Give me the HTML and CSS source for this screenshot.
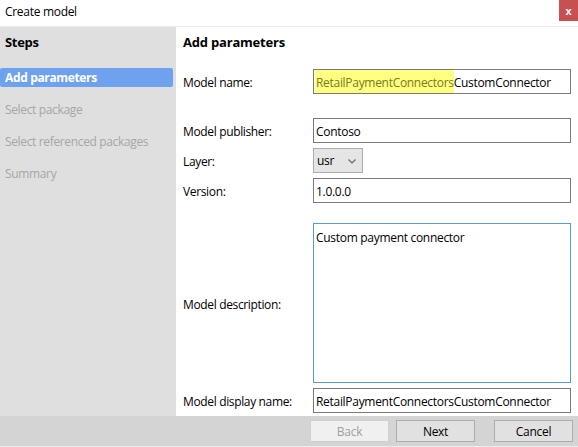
FILE: index.html
```html
<!DOCTYPE html>
<html>
<head>
<meta charset="utf-8">
<link rel="stylesheet" href="styles.css">
</head>
<body>
<div class="window">
  <div class="titlebar">
    <span class="title">Create model</span>
    <span class="close">x</span>
  </div>
  <div class="main">
    <aside class="sidebar">
      <div class="side-head">Steps</div>
      <ul class="steps">
        <li class="step active">Add parameters</li>
        <li class="step">Select package</li>
        <li class="step">Select referenced packages</li>
        <li class="step">Summary</li>
      </ul>
    </aside>
    <section class="content">
      <h1 class="heading">Add parameters</h1>
      <div class="form">
        <div class="row r-name">
          <label class="lbl">Model name:</label>
          <div class="field"><span class="hl">RetailPaymentConnectors</span>CustomConnector</div>
        </div>
        <div class="row r-pub">
          <label class="lbl">Model publisher:</label>
          <div class="field">Contoso</div>
        </div>
        <div class="row r-layer">
          <label class="lbl">Layer:</label>
          <div class="select"><span>usr</span>
            <svg class="chev" width="8" height="5" viewBox="0 0 8 5"><path d="M0.5 0.5 L4 4 L7.5 0.5" fill="none" stroke="#6b6b6b" stroke-width="1.2"/></svg>
          </div>
        </div>
        <div class="row r-ver">
          <label class="lbl">Version:</label>
          <div class="field">1.0.0.0</div>
        </div>
        <div class="row r-desc">
          <label class="lbl">Model description:</label>
          <div class="field area">Custom payment connector</div>
        </div>
        <div class="row r-disp">
          <label class="lbl">Model display name:</label>
          <div class="field">RetailPaymentConnectorsCustomConnector</div>
        </div>
      </div>
    </section>
  </div>
  <div class="footer">
    <button class="btn disabled">Back</button>
    <button class="btn next">Next</button>
    <button class="btn cancel">Cancel</button>
  </div>
</div>
</body>
</html>
```

FILE: styles.css
```css
* { box-sizing: border-box; }
html, body { margin: 0; padding: 0; }
body {
  font-family: "Open Sans", "Noto Sans", "Liberation Sans", sans-serif;
  font-size: 12px;
  color: #000;
  background: #fff;
}
.window {
  width: 578px;
  height: 447px;
  display: flex;
  flex-direction: column;
  background: #fff;
}
.titlebar {
  height: 27px;
  flex: 0 0 27px;
  border-bottom: 1px solid #ececec;
  display: flex;
  align-items: flex-start;
  justify-content: space-between;
}
.title {
  padding: 3px 0 0 5px;
  font-size: 12px;
  letter-spacing: -0.3px;
}
.close {
  width: 19px;
  height: 21px;
  background: #c75050;
  color: #fff;
  font-weight: bold;
  font-size: 11px;
  display: flex;
  align-items: center;
  justify-content: center;
  font-family: "Liberation Sans", sans-serif;
}
.main {
  flex: 1;
  display: flex;
  min-height: 0;
}
.sidebar {
  width: 176px;
  flex: 0 0 176px;
  background: #dfdfdf;
}
.side-head {
  font-weight: bold;
  font-size: 13px;
  padding: 6px 0 0 5px;
  height: 41px;
  letter-spacing: -0.3px;
}
.steps {
  list-style: none;
  margin: 0;
  padding: 0;
}
.step {
  height: 19px;
  width: 173px;
  margin-bottom: 13px;
  padding-left: 5px;
  line-height: 19px;
  color: #a6a6a6;
  letter-spacing: -0.35px;
  border-radius: 2px;
}
.step.active {
  background: #6fa2ee;
  color: #fff;
  font-weight: bold;
}
.content {
  flex: 1;
  padding-left: 7px;
}
.heading {
  margin: 0;
  font-size: 13px;
  font-weight: bold;
  padding-top: 6px;
  height: 42px;
  letter-spacing: -0.2px;
}
.form {
  display: flex;
  flex-direction: column;
}
.row {
  display: flex;
  align-items: center;
}
.lbl {
  width: 130px;
  flex: 0 0 130px;
  letter-spacing: -0.35px;
  padding-top: 2px;
}
.field {
  width: 258px;
  height: 25px;
  border: 1px solid #7a7a7a;
  padding: 1px 0 0 2px;
  display: flex;
  align-items: center;
  letter-spacing: -0.3px;
  white-space: nowrap;
}
.hl {
  background: #ffff80;
  color: #7a7a20;
  height: 23px;
  display: inline-flex;
  align-items: center;
  margin: -1px 0 0 -1px;
  padding: 1px 0 0 1px;
}
.r-name { margin-top: 0; }
.r-pub { margin-top: 24px; }
.r-layer { margin-top: 5px; }
.r-ver { margin-top: 5px; }
.r-desc { margin-top: 20px; }
.r-disp { margin-top: 5px; }
.select {
  width: 50px;
  height: 25px;
  background: #e5e5e5;
  border: 1px solid #acacac;
  display: flex;
  align-items: center;
  justify-content: space-between;
  padding: 0 6px 0 3px;
  letter-spacing: -0.3px;
}
.chev { margin-top: 1px; }
.field.area {
  height: 160px;
  border-color: #5b9bd5;
  align-items: flex-start;
  padding-top: 5px;
}
.footer {
  height: 31px;
  flex: 0 0 31px;
  background: #d4d4d4;
  border-bottom: 1px solid #ececec;
  display: flex;
  align-items: flex-start;
  padding-top: 4px;
  padding-left: 310px;
}
.btn {
  width: 79px;
  height: 22px;
  font-family: inherit;
  font-size: 12px;
  background: #e1e1e1;
  border: 1px solid #adadad;
  padding: 0;
  color: #000;
  letter-spacing: -0.3px;
}
.btn.disabled {
  background: #f0f0f0;
  border-color: #d0d0d0;
  color: #a0a0a0;
}
.btn.next { margin-left: 7px; }
.btn.cancel { margin-left: 19px; }
```
